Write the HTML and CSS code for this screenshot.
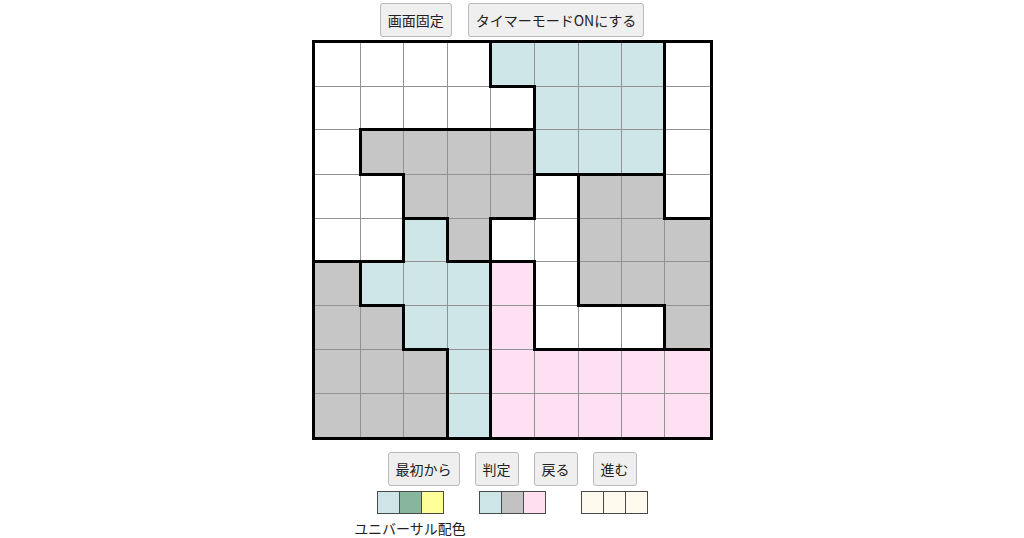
FILE: index.html
```html
<!DOCTYPE html>
<html lang="ja">
<head>
<meta charset="utf-8">
<title>パズル</title>
<link rel="stylesheet" href="styles.css">
</head>
<body>
<div class="page">
  <div class="toolbar top">
    <button class="btn">画面固定</button>
    <button class="btn">タイマーモードONにする</button>
  </div>
  <div class="board">
    <div class="c w"></div><div class="c w"></div><div class="c w"></div><div class="c w r"></div><div class="c u b"></div><div class="c u"></div><div class="c u"></div><div class="c u r"></div><div class="c w"></div>
    <div class="c w"></div><div class="c w b"></div><div class="c w b"></div><div class="c w b"></div><div class="c w r b"></div><div class="c u"></div><div class="c u"></div><div class="c u r"></div><div class="c w"></div>
    <div class="c w r"></div><div class="c g b"></div><div class="c g"></div><div class="c g"></div><div class="c g r"></div><div class="c u b"></div><div class="c u b"></div><div class="c u r b"></div><div class="c w"></div>
    <div class="c w"></div><div class="c w r"></div><div class="c g b"></div><div class="c g"></div><div class="c g r b"></div><div class="c w r"></div><div class="c g"></div><div class="c g r"></div><div class="c w b"></div>
    <div class="c w b"></div><div class="c w r b"></div><div class="c u r"></div><div class="c g r b"></div><div class="c w b"></div><div class="c w r"></div><div class="c g"></div><div class="c g"></div><div class="c g"></div>
    <div class="c g r"></div><div class="c u b"></div><div class="c u"></div><div class="c u r"></div><div class="c p r"></div><div class="c w r"></div><div class="c g b"></div><div class="c g b"></div><div class="c g"></div>
    <div class="c g"></div><div class="c g r"></div><div class="c u b"></div><div class="c u r"></div><div class="c p r"></div><div class="c w b"></div><div class="c w b"></div><div class="c w r b"></div><div class="c g b"></div>
    <div class="c g"></div><div class="c g"></div><div class="c g r"></div><div class="c u r"></div><div class="c p"></div><div class="c p"></div><div class="c p"></div><div class="c p"></div><div class="c p"></div>
    <div class="c g"></div><div class="c g"></div><div class="c g r"></div><div class="c u r"></div><div class="c p"></div><div class="c p"></div><div class="c p"></div><div class="c p"></div><div class="c p"></div>
  </div>
  <div class="toolbar bottom">
    <button class="btn">最初から</button>
    <button class="btn">判定</button>
    <button class="btn">戻る</button>
    <button class="btn">進む</button>
  </div>
  <div class="palettes">
    <div class="palette-col">
      <div class="palette">
        <span class="sw s-blue"></span><span class="sw s-green"></span><span class="sw s-yellow"></span>
      </div>
      <div class="palette-label">ユニバーサル配色</div>
    </div>
    <div class="palette-col">
      <div class="palette">
        <span class="sw s-blue"></span><span class="sw s-gray"></span><span class="sw s-pink"></span>
      </div>
    </div>
    <div class="palette-col">
      <div class="palette">
        <span class="sw s-cream"></span><span class="sw s-cream"></span><span class="sw s-cream"></span>
      </div>
    </div>
  </div>
</div>
</body>
</html>
```

FILE: styles.css
```css
* { box-sizing: border-box; }
html, body { margin: 0; padding: 0; background: #fff; }
body {
  font-family: "Noto Sans CJK JP", "Noto Sans", sans-serif;
  color: #222;
  font-size: 14px;
}
.page {
  display: flex;
  flex-direction: column;
  align-items: center;
  padding-top: 3px;
}
.toolbar {
  display: flex;
  justify-content: center;
}
.toolbar.top { gap: 16px; }
.toolbar.bottom { gap: 15px; margin-top: 12px; }
.btn {
  font-family: inherit;
  font-size: 14px;
  color: #222;
  height: 34px;
  padding: 0 7px;
  background: #efefef;
  border: 1px solid #b9b9b9;
  border-radius: 3px;
  line-height: 1;
}
.board {
  margin-top: 3px;
  display: grid;
  grid-template-columns: 45px 42px 43px 42px 43px 43px 42px 42px 45px;
  grid-template-rows: 43px 42px 44px 43px 42px 43px 43px 43px 43px;
  gap: 1px;
  background: #929292;
  border: 3px solid #000;
}
.c { position: relative; }
.c::before {
  content: "";
  position: absolute;
  inset: -2px;
  border: 0 solid #000;
  z-index: 1;
  pointer-events: none;
}
.c.r::before { border-right-width: 3px; }
.c.b::before { border-bottom-width: 3px; }
.w { background: #ffffff; }
.g { background: #c6c6c6; }
.u { background: #cfe6e8; }
.p { background: #fde0f1; }

.palettes {
  display: flex;
  gap: 35px;
  margin-top: 5px;
}
.palette-col {
  display: flex;
  flex-direction: column;
}
.palette {
  display: flex;
  gap: 1px;
  background: #4a4a4a;
  border: 1px solid #4a4a4a;
}
.sw { display: block; width: 21px; height: 21px; }
.s-blue { background: #cde5e7; }
.s-green { background: #88b59e; }
.s-yellow { background: #ffff99; }
.s-gray { background: #c2c2c2; }
.s-pink { background: #ffdff0; }
.s-cream { background: #fefbee; }
.palette-label {
  margin: 4px -30px 0;
  text-align: center;
  white-space: nowrap;
  font-size: 14px;
  line-height: 20px;
  color: #222;
}
```
